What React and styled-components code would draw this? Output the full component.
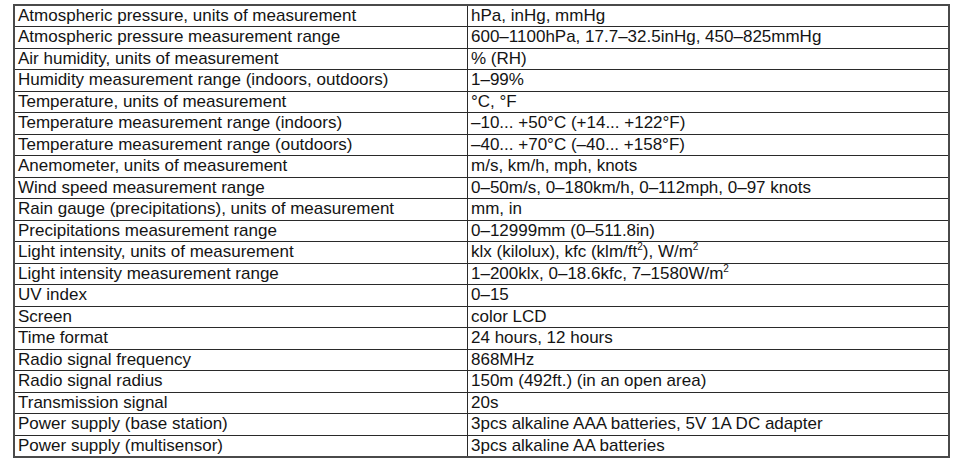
import React from "react";
import styled, { createGlobalStyle } from "styled-components";

const Global = createGlobalStyle`
  html, body { margin: 0; padding: 0; background: #fff; }
  body { font-family: "Liberation Sans", Arial, sans-serif; }
`;

const Page = styled.div`
  padding: 4px 5px 0 13px;
`;

const Table = styled.table`
  border-collapse: collapse;
  width: 937px;
  table-layout: fixed;
  border: 2px solid #4a4a4a;
  font-size: 17px;
  color: #141414;
`;

const Row = styled.tr`
  height: 21.5px;
`;

const Cell = styled.td`
  border: 1px solid #2a2a2a;
  padding: 0 3px 1px 3px;
  line-height: 19px;
  white-space: nowrap;
  vertical-align: middle;
  width: ${(p) => (p.$first ? "446px" : "auto")};
`;

const Sup = styled.sup`
  font-size: 10px;
  line-height: 0;
  vertical-align: 7px;
`;

const rows = [
  ["Atmospheric pressure, units of measurement", "hPa, inHg, mmHg"],
  ["Atmospheric pressure measurement range", "600–1100hPa, 17.7–32.5inHg, 450–825mmHg"],
  ["Air humidity, units of measurement", "% (RH)"],
  ["Humidity measurement range (indoors, outdoors)", "1–99%"],
  ["Temperature, units of measurement", "°C, °F"],
  ["Temperature measurement range (indoors)", "–10... +50°C (+14... +122°F)"],
  ["Temperature measurement range (outdoors)", "–40... +70°C (–40... +158°F)"],
  ["Anemometer, units of measurement", "m/s, km/h, mph, knots"],
  ["Wind speed measurement range", "0–50m/s, 0–180km/h, 0–112mph, 0–97 knots"],
  ["Rain gauge (precipitations), units of measurement", "mm, in"],
  ["Precipitations measurement range", "0–12999mm (0–511.8in)"],
  [
    "Light intensity, units of measurement",
    <>
      klx (kilolux), kfc (klm/ft<Sup>2</Sup>), W/m<Sup>2</Sup>
    </>,
  ],
  [
    "Light intensity measurement range",
    <>
      1–200klx, 0–18.6kfc, 7–1580W/m<Sup>2</Sup>
    </>,
  ],
  ["UV index", "0–15"],
  ["Screen", "color LCD"],
  ["Time format", "24 hours, 12 hours"],
  ["Radio signal frequency", "868MHz"],
  ["Radio signal radius", "150m (492ft.) (in an open area)"],
  ["Transmission signal", "20s"],
  ["Power supply (base station)", "3pcs alkaline AAA batteries, 5V 1A DC adapter"],
  ["Power supply (multisensor)", "3pcs alkaline AA batteries"],
];

export default function App() {
  return (
    <>
      <Global />
      <Page>
        <Table>
          <tbody>
            {rows.map(([k, v], i) => (
              <Row key={i}>
                <Cell $first>{k}</Cell>
                <Cell>{v}</Cell>
              </Row>
            ))}
          </tbody>
        </Table>
      </Page>
    </>
  );
}
